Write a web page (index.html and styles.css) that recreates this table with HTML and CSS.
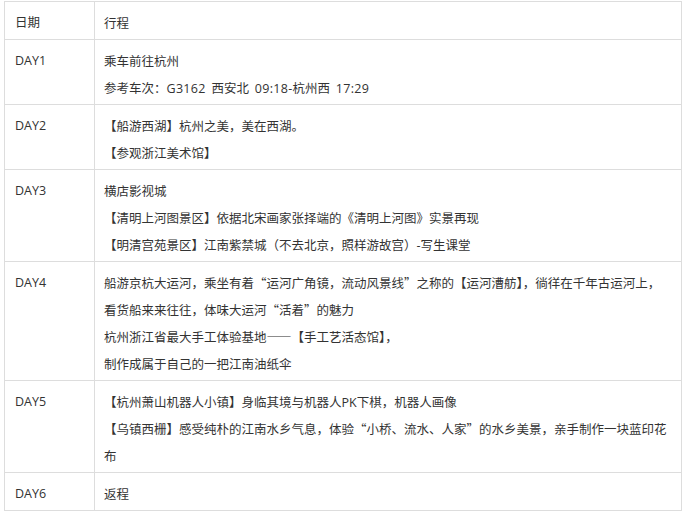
FILE: index.html
```html
<!DOCTYPE html>
<html lang="zh-CN">
<head>
<meta charset="utf-8">
<title>行程</title>
<link rel="stylesheet" href="styles.css">
</head>
<body>
<table class="trip">
  <tr>
    <td class="day">日期</td>
    <td class="plan">行程</td>
  </tr>
  <tr>
    <td class="day">DAY1</td>
    <td class="plan">乘车前往杭州<br><span class="train">参考车次：<span class="lat">G3162</span> 西安北 <span class="lat">09:18-</span>杭州西 <span class="lat">17:29</span></span></td>
  </tr>
  <tr>
    <td class="day">DAY2</td>
    <td class="plan">【船游西湖】杭州之美，美在西湖。<br>【参观浙江美术馆】</td>
  </tr>
  <tr>
    <td class="day">DAY3</td>
    <td class="plan">横店影视城<br>【清明上河图景区】依据北宋画家张择端的《清明上河图》实景再现<br>【明清宫苑景区】江南紫禁城（不去北京，照样游故宫）<span class="lat">-</span>写生课堂</td>
  </tr>
  <tr>
    <td class="day">DAY4</td>
    <td class="plan">船游京杭大运河，乘坐有着“运河广角镜，流动风景线”之称的【运河漕舫】，徜徉在千年古运河上，看货船来来往往，体味大运河“活着”的魅力<br>杭州浙江省最大手工体验基地——【手工艺活态馆】，<br>制作成属于自己的一把江南油纸伞</td>
  </tr>
  <tr>
    <td class="day">DAY5</td>
    <td class="plan">【杭州萧山机器人小镇】身临其境与机器人<span class="lat">PK</span>下棋，机器人画像<br>【乌镇西栅】感受纯朴的江南水乡气息，体验“小桥、流水、人家”的水乡美景，亲手制作一块蓝印花布</td>
  </tr>
  <tr>
    <td class="day">DAY6</td>
    <td class="plan">返程</td>
  </tr>
</table>
</body>
</html>
```

FILE: styles.css
```css
html, body {
  margin: 0;
  padding: 0;
  background: #ffffff;
}

body {
  padding: 1px 4px 0 4px;
  font-family: "Noto Sans CJK SC", sans-serif;
  font-size: 12.5px;
  line-height: 27px;
  color: #333333;
}

.trip {
  border-collapse: separate;
  border-spacing: 0;
  border-top: 1px solid #dddddd;
  border-left: 1px solid #dddddd;
  table-layout: fixed;
  width: 678px;
}

.trip td {
  box-sizing: border-box;
  vertical-align: top;
  border-right: 1px solid #dddddd;
  border-bottom: 1px solid #dddddd;
  padding: 7px 9px 3px 9px;
}

.trip .day {
  width: 90px;
  padding-left: 10px;
  font-family: "Open Sans", "Noto Sans CJK SC", sans-serif;
}

.trip .plan {
  width: 587px;
}

span.lat {
  font-family: "Open Sans", "Noto Sans CJK SC", sans-serif;
  line-height: 1;
}

.train {
  word-spacing: 3px;
}

.train .lat {
  letter-spacing: 0.3px;
}
```
